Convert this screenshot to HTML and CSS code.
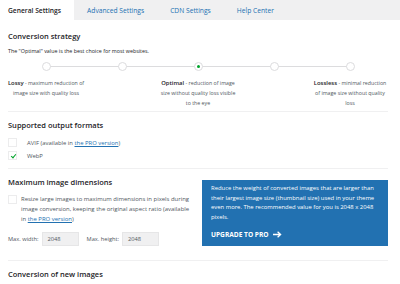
FILE: index.html
```html
<!DOCTYPE html>
<html>
<head>
<meta charset="utf-8">
<link rel="stylesheet" href="styles.css">
</head>
<body>
<nav class="tabs">
  <a class="tab active">General Settings</a>
  <a class="tab">Advanced Settings</a>
  <a class="tab">CDN Settings</a>
  <a class="tab">Help Center</a>
</nav>
<main class="content">
  <section class="section">
    <h2 class="heading first">Conversion strategy</h2>
    <p class="desc">The "Optimal" value is the best choice for most websites.</p>
    <div class="steps">
      <div class="step"><span class="dot"></span></div>
      <div class="step"><span class="dot"></span></div>
      <div class="step"><span class="dot active"></span></div>
      <div class="step"><span class="dot"></span></div>
      <div class="step"><span class="dot"></span></div>
    </div>
    <div class="labels">
      <p class="label"><strong>Lossy</strong> - maximum reduction of<br>image size with quality loss</p>
      <p class="label"><strong>Optimal</strong> - reduction of image<br>size without quality loss visible<br>to the eye</p>
      <p class="label"><strong>Lossless</strong> - minimal reduction<br>of image size without quality<br>loss</p>
    </div>
  </section>
  <section class="section formats">
    <h2 class="heading">Supported output formats</h2>
    <label class="check"><span class="box"></span><span>AVIF (available in <a class="link">the PRO version</a>)</span></label>
    <label class="check"><span class="box checked"></span><span>WebP</span></label>
  </section>
  <section class="section split">
    <div class="col">
      <h2 class="heading">Maximum image dimensions</h2>
      <label class="check multi"><span class="box"></span><span class="text">Resize large images to maximum dimensions in pixels during image conversion, keeping the original aspect ratio (available in <a class="link">the PRO version</a>)</span></label>
      <div class="dims">
        <span>Max. width:</span><span class="input">2048</span>
        <span>Max. height:</span><span class="input">2048</span>
      </div>
    </div>
    <aside class="promo">
      <p>Reduce the weight of converted images that are larger than their largest image size (thumbnail size) used in your theme even more. The recommended value for you is 2048 x 2048 pixels.</p>
      <a class="upgrade">UPGRADE TO PRO <svg width="9" height="7" viewBox="0 0 9 7"><path d="M0 3.5H7.3M4.6 0.8L7.6 3.5L4.6 6.2" fill="none" stroke="#fff" stroke-width="1.3"/></svg></a>
    </aside>
  </section>
  <section class="section last">
    <h2 class="heading">Conversion of new images</h2>
    <label class="check"><span class="box"></span></label>
  </section>
</main>
</body>
</html>
```

FILE: styles.css
```css
* { box-sizing: border-box; }
html, body { margin: 0; padding: 0; background: #fff; }
body {
  width: 400px;
  height: 284px;
  overflow: hidden;
  font-family: "Open Sans", "Noto Sans", sans-serif;
  color: #50575e;
  font-size: 5px;
}
.tabs {
  display: flex;
  height: 20px;
  background: #f0f0f1;
}
.tab {
  display: flex;
  align-items: center;
  padding: 0 13px;
  font-size: 6.7px;
  color: #2271b1;
}
.tab.active {
  background: #fff;
  color: #1d2327;
  font-weight: 600;
  padding-left: 8px;
}
.content {
  padding: 0 12px 0 8px;
}
.section {
  border-bottom: 1px solid #f0f0f1;
  padding-bottom: 3px;
}
.section.formats { padding-bottom: 6px; }
.section.last { border-bottom: 0; }
.heading {
  margin: 8px 0 0;
  font-size: 7.5px;
  line-height: 10px;
  font-weight: 600;
  color: #1d2327;
}
.heading.first { margin-top: 11px; }
.desc {
  margin: 6px 0 0;
  line-height: 8px;
  font-size: 5.35px;
  color: #1d2327;
}
.steps {
  display: grid;
  grid-template-columns: repeat(5, 76px);
  margin-top: 7px;
  position: relative;
}
.steps::before {
  content: "";
  position: absolute;
  left: 38px;
  right: 38px;
  top: 4px;
  height: 1px;
  background: #dcdcde;
}
.step { display: flex; justify-content: center; }
.dot {
  position: relative;
  width: 9px;
  height: 9px;
  border-radius: 50%;
  border: 1px solid #dcdcde;
  background: #fff;
  display: flex;
  align-items: center;
  justify-content: center;
}
.dot.active::after {
  content: "";
  width: 3px;
  height: 3px;
  border-radius: 50%;
  background: #00a32a;
}
.labels {
  display: grid;
  grid-template-columns: repeat(5, 76px);
  margin-top: 7px;
}
.label {
  margin: 0 -8px;
  text-align: center;
  line-height: 10px;
  font-size: 5.25px;
  white-space: nowrap;
}
.label:nth-child(2) { grid-column: 3; }
.label:nth-child(3) { grid-column: 5; }
.label strong { font-weight: 600; color: #1d2327; font-size: 5.9px; }
.check {
  display: flex;
  align-items: center;
  gap: 10px;
  height: 13px;
  font-size: 5.9px;
}
.section .heading + .check { margin-top: 6px; }
.box {
  flex: none;
  width: 9px;
  height: 9px;
  border: 1px solid #ececed;
  background: #fff;
  position: relative;
}
.box.checked::after {
  content: "";
  position: absolute;
  left: 2.5px;
  top: 1px;
  width: 2px;
  height: 4px;
  border: solid #00a32a;
  border-width: 0 1px 1px 0;
  transform: rotate(40deg);
}
.link { color: #2271b1; text-decoration: underline; }
.split {
  display: flex;
  gap: 8px;
  padding-bottom: 14px;
}
.col { flex: 1; }
.section .check.multi {
  height: auto;
  align-items: flex-start;
  gap: 4px;
  margin-top: 7px;
  font-size: 5.95px;
}
.check.multi .box { margin-top: 1px; }
.check.multi .text { line-height: 10px; }
.dims {
  display: flex;
  align-items: center;
  margin-top: 8px;
  font-size: 5.7px;
}
.input {
  width: 37px;
  height: 14px;
  margin: 0 8px 0 3px;
  background: #f0f0f1;
  border: 1px solid #e6e6e7;
  display: flex;
  align-items: center;
  padding-left: 5px;
}
.promo {
  flex: none;
  width: 186px;
  margin-top: 11px;
  align-self: flex-start;
  background: #2271b1;
  color: #fff;
  padding: 4px 6px 6px 9px;
}
.promo p {
  margin: 0;
  line-height: 9.7px;
  font-size: 5.9px;
}
.upgrade {
  display: flex;
  align-items: center;
  gap: 4px;
  margin-top: 7px;
  font-weight: 700;
  font-size: 6.6px;
  line-height: 10px;
}
.last .check { margin-top: 4px; }
```
